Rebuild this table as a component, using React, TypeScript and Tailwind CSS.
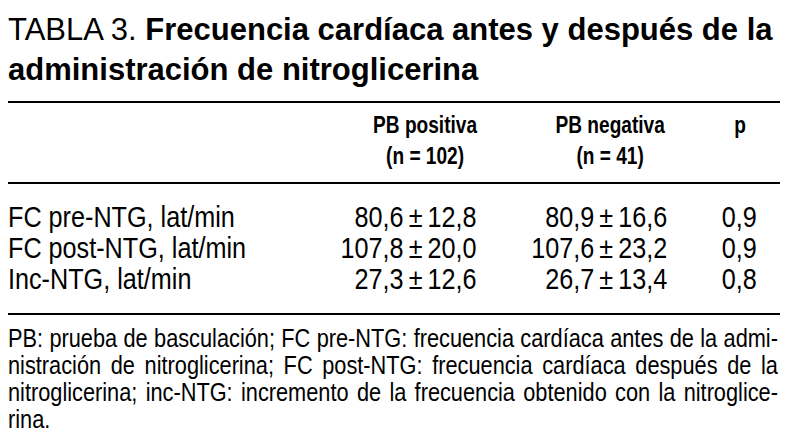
// Helvetica Condensed look: Liberation Sans squeezed horizontally
const body = "font-['Liberation_Sans',Arial,sans-serif]"

interface Row {
  label: string
  pos: [string, string]
  neg: [string, string]
  p: string
}

const rows: Row[] = [
  { label: 'FC pre-NTG, lat/min', pos: ['80,6', '12,8'], neg: ['80,9', '16,6'], p: '0,9' },
  { label: 'FC post-NTG, lat/min', pos: ['107,8', '20,0'], neg: ['107,6', '23,2'], p: '0,9' },
  { label: 'Inc-NTG, lat/min', pos: ['27,3', '12,6'], neg: ['26,7', '13,4'], p: '0,8' },
]

const notes = [
  'PB: prueba de basculación; FC pre-NTG: frecuencia cardíaca antes de la admi-',
  'nistración de nitroglicerina; FC post-NTG: frecuencia cardíaca después de la',
  'nitroglicerina; inc-NTG: incremento de la frecuencia obtenido con la nitroglice-',
]

function PlusMinus({ value, leftWidth }: { value: [string, string]; leftWidth: string }) {
  return (
    <div className="flex">
      <span className={`${leftWidth} text-right`}>{value[0]}</span>
      <span className="px-[6px]">±</span>
      <span>{value[1]}</span>
    </div>
  )
}

export default function App() {
  return (
    <div className={`w-[794px] h-[448px] bg-white text-black pl-2 pr-[14px] overflow-hidden ${body}`}>
      {/* Title */}
      <div className="pt-[10px] text-[31px] leading-[40px]">
        <div className="whitespace-nowrap">
          <span>TABLA 3. </span>
          <span className="font-bold">Frecuencia cardíaca antes y después de la</span>
        </div>
        <div className="font-bold">administración de nitroglicerina</div>
      </div>

      <div className="mt-[11px] h-[2px] bg-black" />

      {/* Header (scaled x0.83) */}
      <div className="grid grid-cols-[388px_229px_217px_96px] w-[930px] origin-left scale-x-[0.83] font-bold text-[23px] leading-[31px] mt-[7px]">
        <div />
        <div className="text-center">
          <div>PB positiva</div>
          <div>(n = 102)</div>
        </div>
        <div className="text-center">
          <div>PB negativa</div>
          <div>(n = 41)</div>
        </div>
        <div className="text-center">p</div>
      </div>

      <div className="mt-[10px] h-[2px] bg-black" />

      {/* Rows (scaled x0.84) */}
      <div className="w-[918px] origin-left scale-x-[0.84] text-[30px] leading-[31px] mt-[17px]">
        {rows.map((r) => (
          <div key={r.label} className="grid grid-cols-[383px_226px_214px_95px]">
            <div className="whitespace-nowrap">{r.label}</div>
            <PlusMinus value={r.pos} leftWidth="w-[88px]" />
            <PlusMinus value={r.neg} leftWidth="w-[89px]" />
            <div className="text-center">{r.p}</div>
          </div>
        ))}
      </div>

      <div className="mt-[19px] h-[2px] bg-black" />

      {/* Footnote */}
      <div className="w-[885px] origin-left scale-x-[0.87] text-[25px] leading-[27px] mt-[10px]">
        {notes.map((n) => (
          <div key={n} className="whitespace-nowrap text-justify [text-align-last:justify]">{n}</div>
        ))}
        <div>rina.</div>
      </div>
    </div>
  )
}
